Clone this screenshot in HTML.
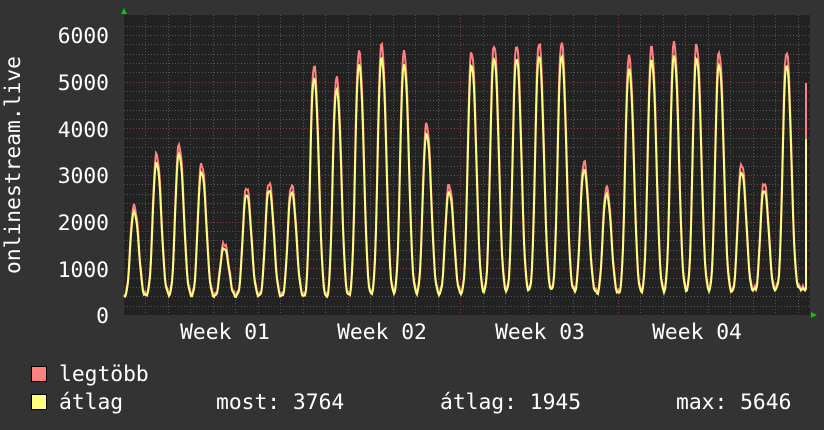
<!DOCTYPE html>
<html><head><meta charset="utf-8"><style>
html,body{margin:0;padding:0;background:#333;}
svg{display:block}
text{font-family:"DejaVu Sans Mono","Liberation Mono",monospace;font-size:21.3px;fill:#fff}
</style></head><body>
<svg id="s" width="824" height="430" viewBox="0 0 824 430" xmlns="http://www.w3.org/2000/svg">
<rect width="824" height="430" fill="#333"/>
<rect x="124" y="15" width="686" height="300" fill="#222"/>
<g id="grid"></g>
<g id="lines"></g>
<g text-anchor="end">
<text x="109" y="43">6000</text>
<text x="109" y="90">5000</text>
<text x="109" y="137">4000</text>
<text x="109" y="183">3000</text>
<text x="109" y="230">2000</text>
<text x="109" y="277">1000</text>
<text x="109" y="323">0</text>
</g>
<text transform="translate(20,165) rotate(-90)" text-anchor="middle">onlinestream.live</text>
<g text-anchor="middle">
<text x="225" y="339">Week 01</text>
<text x="382" y="339">Week 02</text>
<text x="540" y="339">Week 03</text>
<text x="697" y="339">Week 04</text>
</g>
<polygon points="121,14 127,14 124,8" fill="#0c0"/>
<polygon points="811,312 811,318 817,315" fill="#0c0"/>
<rect x="31.5" y="366.5" width="15" height="15" fill="#ff8080" stroke="#000"/>
<rect x="31.5" y="394.5" width="15" height="15" fill="#ffff80" stroke="#000"/>
<text x="59" y="381">legtöbb</text>
<text x="59" y="409">átlag</text>
<text x="216" y="409">most: 3764</text>
<text x="440" y="409">átlag: 1945</text>
<text x="676" y="409">max: 5646</text>
</svg>
<script>
var NS="http://www.w3.org/2000/svg";
function el(p,t,a){var e=document.createElementNS(NS,t);for(var k in a)e.setAttribute(k,a[k]);p.appendChild(e);return e;}
var g=document.getElementById('grid');
function Y(v){return 315-v*0.04667;}
for(var v=200;v<=6200;v+=200){var y=Math.round(Y(v))+0.5;var maj=v%1000==0;
el(g,'line',{x1:124,x2:810,y1:y,y2:y,stroke:maj?'#8a3c3c':'#555','stroke-dasharray':'1,2'});}
for(var x=145-22.5;x<810;x+=22.5){if(x<124)continue;var xi=Math.round(x)+0.5;var maj=Math.abs(((x-145)/157.5)-Math.round((x-145)/157.5))<0.01;
el(g,'line',{x1:xi,x2:xi,y1:15,y2:315,stroke:maj?'#8a3c3c':'#555','stroke-dasharray':'1,2'});}
var peaks=[2300,3400,3600,3200,1500,2700,2800,2750,5300,5050,5600,5750,5600,4050,2750,5600,5750,5750,5800,5800,3250,2700,5500,5700,5800,5750,5600,3200,2800,5600];
var base=[350,420,400,380,380,400,380,380,350,350,380,430,450,430,420,450,470,480,500,500,460,420,450,470,480,500,480,450,420,550];
function val(x,scale){var d=(x-134)/22.5;var k=Math.round(d);var best=0;
for(var j=k-1;j<=k+1;j++){if(j<0||j>=peaks.length)continue;var dd=d-j;var b=base[j];var s=dd<0?0.22:0.28;
var f=Math.exp(-Math.pow(Math.abs(dd)/s,2.4));best=Math.max(best,b+(peaks[j]*scale-b)*f);}
if(best<300)best=base[Math.max(0,Math.min(peaks.length-1,k))];
return best;}
var l=document.getElementById('lines');
var r=[],yl=[];
for(var x=124;x<=806;x++){var n=Math.sin(x*1.7)*50;
r.push(x+','+Y(val(x,1)+n+30).toFixed(1));yl.push(x+','+Y(val(x,0.955)+n*0.5).toFixed(1));}
r.push('806,'+Y(4950).toFixed(1));r.push('807,'+Y(4950).toFixed(1));
yl.push('806,'+Y(3764).toFixed(1));
el(l,'polyline',{points:r.join(' '),fill:'none',stroke:'#ff8080','stroke-width':2});
el(l,'polyline',{points:yl.join(' '),fill:'none',stroke:'#ffff80','stroke-width':2});
</script>
</body></html>
